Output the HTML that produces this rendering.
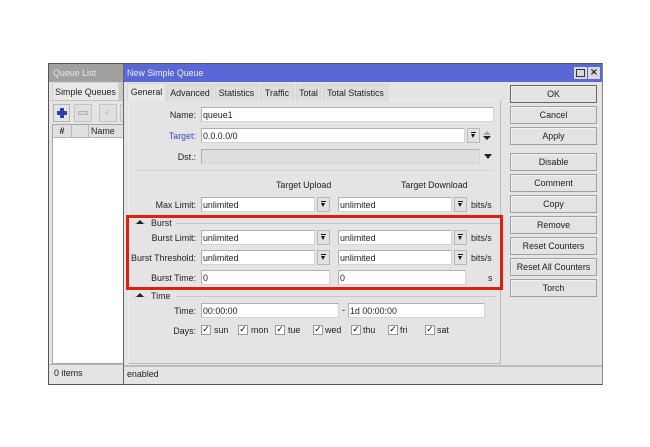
<!DOCTYPE html>
<html>
<head>
<meta charset="utf-8">
<style>
html,body{margin:0;padding:0;background:#fff;}
#p{position:relative;width:650px;height:447px;overflow:hidden;background:#fff;font:8.9px/12px "Liberation Sans",sans-serif;color:#222;filter:blur(.35px);}
#p div{position:absolute;box-sizing:border-box;white-space:nowrap;}
.i{background:#fff;border:1px solid #b0b0b0;border-right-color:#d4d4d4;border-bottom-color:#d4d4d4;padding-left:1px;height:15px;line-height:14px;font-size:8.9px;}
.l{text-align:right;width:90px;left:106px;height:14px;line-height:14px;}
.s{width:13px;height:15px;background:#e2e2e2;border:1px solid #b8b8b8;}
.s:before{content:"";position:absolute;left:3px;top:3px;width:5px;height:1px;background:#111;}
.s:after{content:"";position:absolute;left:3px;top:5px;width:0;height:0;border-left:2.5px solid transparent;border-right:2.5px solid transparent;border-top:4px solid #111;}
.b{left:510px;width:87px;height:18px;background:#e3e3e3;border:1px solid #a0a0a0;box-shadow:inset 1px 1px 0 #f2f2f2;text-align:center;line-height:17px;}
.t{height:17px;top:84px;background:#dedede;border:1px solid #d4d4d4;border-bottom:0;text-align:center;line-height:16px;}
.c{width:10px;height:10px;background:#fff;border:1px solid #999;top:325px;font:bold 9px/9px "DejaVu Sans",sans-serif;text-align:center;color:#000;}
.d{top:324px;height:13px;line-height:13px;}
.u{width:0;height:0;border-left:4px solid transparent;border-right:4px solid transparent;border-bottom:4px solid #222;}
</style>
</head>
<body>
<div id="p">
<div style="left:48px;top:63px;width:555px;height:322px;background:#e4e4e4;border:1px solid #555;border-right-color:#888;"></div>

<!-- left window -->
<div style="left:49px;top:64px;width:74px;height:18px;background:#a0a0a0;color:#e8e8e8;padding-left:4px;line-height:18px;">Queue List</div>
<div style="left:52px;top:82px;width:67px;height:19px;background:#e8e8e8;border:1px solid #d4d4d4;border-bottom:0;text-align:center;line-height:18px;">Simple Queues</div>
<div style="left:119px;top:82px;width:4px;height:19px;background:#c8c8c8;"></div>
<div style="left:50px;top:100px;width:73px;height:1px;background:#c4c4c4;"></div>
<div style="left:53px;top:104px;width:17px;height:18px;background:#e4e4e4;border:1px solid #b4b4b4;"></div>
<div style="left:57px;top:111px;width:10px;height:4px;background:#2a3fb0;"></div>
<div style="left:60px;top:108px;width:4px;height:10px;background:#2a3fb0;"></div>
<div style="left:74px;top:104px;width:18px;height:18px;background:#e0e0e0;border:1px solid #c4c4c4;"></div>
<div style="left:78px;top:111px;width:10px;height:4px;background:#d8d8d8;border:1px solid #b4b4b4;"></div>
<div style="left:99px;top:104px;width:18px;height:18px;background:#e0e0e0;border:1px solid #c4c4c4;color:#bbb;text-align:center;line-height:16px;font-family:'DejaVu Sans',sans-serif;">&#10003;</div>
<div style="left:120px;top:104px;width:3px;height:18px;background:#e0e0e0;border:1px solid #c4c4c4;border-right:0;"></div>
<div style="left:52px;top:124px;width:71px;height:240px;background:#fff;border:1px solid #a8a8a8;border-right:0;"></div>
<div style="left:53px;top:125px;width:19px;height:13px;background:#e0e0e0;border-right:1px solid #b8b8b8;border-bottom:1px solid #b8b8b8;text-align:center;line-height:13px;font-weight:bold;">#</div>
<div style="left:72px;top:125px;width:17px;height:13px;background:#e0e0e0;border-right:1px solid #b8b8b8;border-bottom:1px solid #b8b8b8;"></div>
<div style="left:89px;top:125px;width:34px;height:13px;background:#e0e0e0;border-bottom:1px solid #b8b8b8;padding-left:2px;line-height:13px;">Name</div>
<div style="left:49px;top:364px;width:74px;height:18px;background:#e4e4e4;border-top:1px solid #b4b4b4;padding-left:5px;line-height:16px;">0 items</div>
<div style="left:123px;top:64px;width:1px;height:320px;background:#666;"></div>

<!-- title -->
<div style="left:124px;top:64px;width:478px;height:18px;background:#5a67d6;color:#eef;padding-left:3px;line-height:18px;">New Simple Queue</div>
<div style="left:574px;top:67px;width:13px;height:12px;background:#d8d8d8;"></div>
<div style="left:576px;top:69px;width:9px;height:8px;border:1px solid #333;"></div>
<div style="left:588px;top:67px;width:12px;height:12px;background:#d8d8d8;font:bold 10px/12px 'DejaVu Sans',sans-serif;text-align:center;color:#222;">×</div>

<!-- tabs -->
<div style="left:128px;top:100px;width:373px;height:264px;border:1px solid #bcbcbc;border-left-color:#ececec;border-top-color:#ececec;"></div>
<div class="t" style="left:127px;top:83px;width:39px;height:18px;background:#e8e8e8;">General</div>
<div class="t" style="left:167px;width:46px;">Advanced</div>
<div class="t" style="left:215px;width:43px;">Statistics</div>
<div class="t" style="left:260px;width:34px;">Traffic</div>
<div class="t" style="left:296px;width:25px;">Total</div>
<div class="t" style="left:323px;width:65px;">Total Statistics</div>

<!-- general -->
<div class="l" style="top:108px;">Name:</div>
<div class="i" style="left:201px;top:107px;width:293px;">queue1</div>
<div class="l" style="top:129px;color:#3a49c8;">Target:</div>
<div class="i" style="left:201px;top:128px;width:264px;">0.0.0.0/0</div>
<div class="s" style="left:467px;top:128px;"></div>
<div class="u" style="left:483px;top:131px;border-bottom-color:#aaa;"></div>
<div class="u" style="left:483px;top:136px;border-bottom:0;border-top:4px solid #222;"></div>
<div class="l" style="top:150px;">Dst.:</div>
<div class="i" style="left:201px;top:149px;width:279px;background:#dedede;"></div>
<div class="u" style="left:484px;top:154px;border-bottom:0;border-top:5px solid #222;"></div>
<div style="left:136px;top:170px;width:358px;height:1px;background:#d4d4d4;"></div>

<div style="left:276px;top:179px;height:12px;">Target Upload</div>
<div style="left:401px;top:179px;height:12px;">Target Download</div>

<div class="l" style="top:198px;">Max Limit:</div>
<div class="i" style="left:201px;top:197px;width:114px;">unlimited</div><div class="s" style="left:317px;top:197px;"></div>
<div class="i" style="left:338px;top:197px;width:114px;">unlimited</div><div class="s" style="left:454px;top:197px;"></div>
<div style="left:471px;top:199px;height:12px;">bits/s</div>

<!-- burst -->
<div style="left:134px;top:223px;width:366px;height:1px;background:#c8c8c8;"></div>
<div style="left:146px;top:217px;height:12px;width:30px;background:#e4e4e4;padding-left:5px;line-height:12px;">Burst</div>
<div class="u" style="left:136px;top:220px;"></div>
<div class="l" style="top:231px;">Burst Limit:</div>
<div class="i" style="left:201px;top:230px;width:114px;">unlimited</div><div class="s" style="left:317px;top:230px;"></div>
<div class="i" style="left:338px;top:230px;width:114px;">unlimited</div><div class="s" style="left:454px;top:230px;"></div>
<div style="left:471px;top:232px;height:12px;">bits/s</div>
<div class="l" style="top:251px;">Burst Threshold:</div>
<div class="i" style="left:201px;top:250px;width:114px;">unlimited</div><div class="s" style="left:317px;top:250px;"></div>
<div class="i" style="left:338px;top:250px;width:114px;">unlimited</div><div class="s" style="left:454px;top:250px;"></div>
<div style="left:471px;top:252px;height:12px;">bits/s</div>
<div class="l" style="top:271px;">Burst Time:</div>
<div class="i" style="left:201px;top:270px;width:129px;">0</div>
<div class="i" style="left:338px;top:270px;width:128px;">0</div>
<div style="left:488px;top:272px;height:12px;">s</div>

<div style="left:126px;top:215px;width:377px;height:75px;border:3px solid #e0200f;"></div>

<!-- time -->
<div style="left:134px;top:296px;width:362px;height:1px;background:#c8c8c8;"></div>
<div style="left:146px;top:290px;height:12px;width:30px;background:#e4e4e4;padding-left:5px;line-height:12px;">Time</div>
<div class="u" style="left:136px;top:293px;"></div>
<div class="l" style="top:304px;">Time:</div>
<div class="i" style="left:201px;top:303px;width:138px;">00:00:00</div>
<div style="left:342px;top:304px;height:12px;">-</div>
<div class="i" style="left:348px;top:303px;width:137px;">1d 00:00:00</div>
<div class="l" style="top:324px;">Days:</div>
<div class="c" style="left:201px;">✓</div><div class="d" style="left:214px;">sun</div>
<div class="c" style="left:238px;">✓</div><div class="d" style="left:251px;">mon</div>
<div class="c" style="left:275px;">✓</div><div class="d" style="left:288px;">tue</div>
<div class="c" style="left:313px;">✓</div><div class="d" style="left:325px;">wed</div>
<div class="c" style="left:351px;">✓</div><div class="d" style="left:363px;">thu</div>
<div class="c" style="left:388px;">✓</div><div class="d" style="left:400px;">fri</div>
<div class="c" style="left:425px;">✓</div><div class="d" style="left:437px;">sat</div>

<!-- status -->
<div style="left:124px;top:365px;width:478px;height:19px;background:#e4e4e4;border-top:2px solid #bcbcbc;padding-left:3px;line-height:15px;">enabled</div>

<!-- buttons -->
<div class="b" style="top:85px;border:1px solid #666;">OK</div>
<div class="b" style="top:106px;">Cancel</div>
<div class="b" style="top:127px;">Apply</div>
<div class="b" style="top:153px;">Disable</div>
<div class="b" style="top:174px;">Comment</div>
<div class="b" style="top:195px;">Copy</div>
<div class="b" style="top:216px;">Remove</div>
<div class="b" style="top:237px;">Reset Counters</div>
<div class="b" style="top:258px;">Reset All Counters</div>
<div class="b" style="top:279px;">Torch</div>
</div>
</body>
</html>
